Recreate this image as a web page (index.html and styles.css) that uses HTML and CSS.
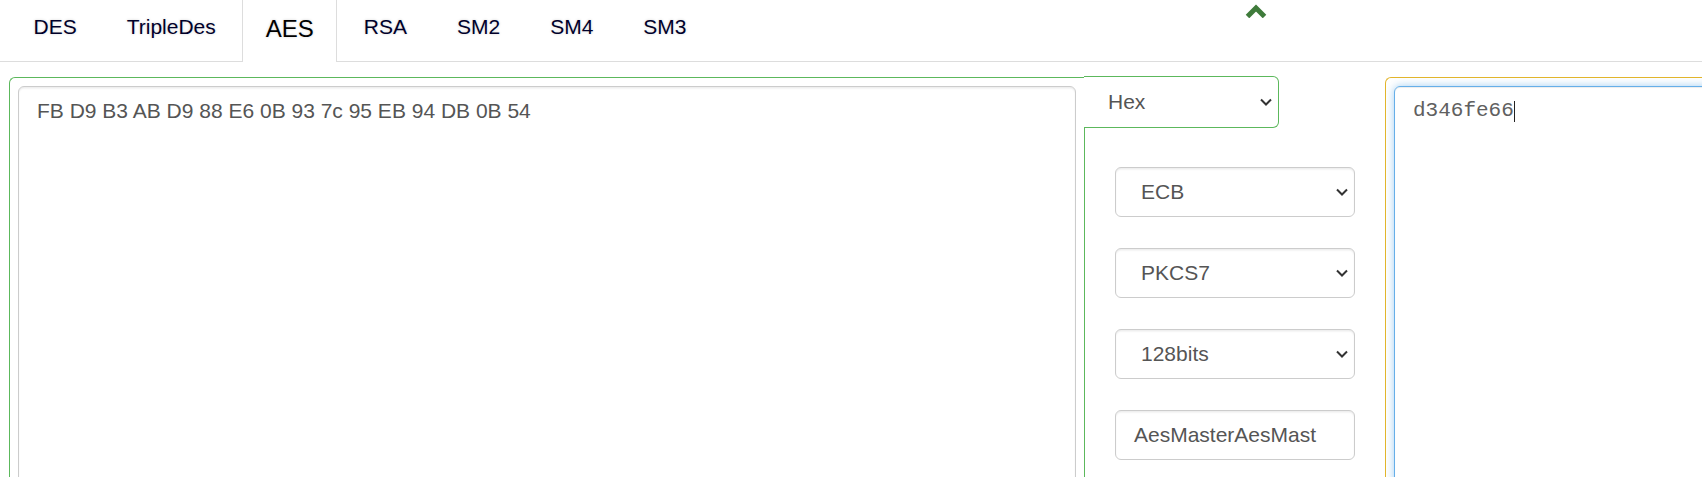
FILE: index.html
```html
<!DOCTYPE html>
<html lang="en">
<head>
<meta charset="utf-8">
<title>AES</title>
<link rel="stylesheet" href="styles.css">
</head>
<body>
<div class="page">
  <nav class="tabs">
    <a class="tab">DES</a>
    <a class="tab">TripleDes</a>
    <a class="tab active">AES</a>
    <a class="tab">RSA</a>
    <a class="tab">SM2</a>
    <a class="tab">SM4</a>
    <a class="tab">SM3</a>
    <span class="toggle">
      <svg width="22" height="14" viewBox="0 0 22 14"><polyline points="2.5,12.5 11,4 19.5,12.5" fill="none" stroke="#3f7b3b" stroke-width="5" stroke-linejoin="miter"/></svg>
    </span>
  </nav>
  <div class="workspace">
    <section class="panel panel-input">
      <div class="textarea">FB D9 B3 AB D9 88 E6 0B 93 7c 95 EB 94 DB 0B 54</div>
    </section>
    <section class="controls">
      <div class="format">
        <div class="select select-bare"><span class="value">Hex</span><svg class="arrow" width="12" height="8" viewBox="0 0 12 8"><polyline points="1,1.5 6,6.5 11,1.5" fill="none" stroke="#333" stroke-width="2"/></svg></div>
      </div>
      <div class="select"><span class="value">ECB</span><svg class="arrow" width="12" height="8" viewBox="0 0 12 8"><polyline points="1,1.5 6,6.5 11,1.5" fill="none" stroke="#333" stroke-width="2"/></svg></div>
      <div class="select"><span class="value">PKCS7</span><svg class="arrow" width="12" height="8" viewBox="0 0 12 8"><polyline points="1,1.5 6,6.5 11,1.5" fill="none" stroke="#333" stroke-width="2"/></svg></div>
      <div class="select"><span class="value">128bits</span><svg class="arrow" width="12" height="8" viewBox="0 0 12 8"><polyline points="1,1.5 6,6.5 11,1.5" fill="none" stroke="#333" stroke-width="2"/></svg></div>
      <div class="input">AesMasterAesMast</div>
    </section>
    <section class="panel panel-output">
      <div class="textarea textarea-focus">d346fe66<span class="caret"></span></div>
    </section>
  </div>
</div>
</body>
</html>
```
FILE: styles.css
```css
html, body {
  margin: 0;
  height: 477px;
  overflow: hidden;
  background: #fff;
}
body {
  font-family: "Liberation Sans", Arial, sans-serif;
}
.tabs {
  display: flex;
  height: 61px;
  border-bottom: 1px solid #ddd;
  padding-left: 10px;
}
.tab {
  box-sizing: border-box;
  padding: 12px 22.5px 0;
  margin-right: 3px;
  margin-bottom: -1px;
  border: 1px solid transparent;
  border-top: 0;
  border-bottom: 0;
  font-size: 21px;
  line-height: 30px;
  color: #00002a;
  text-shadow: 0 0 3px rgba(0, 0, 0, 0.18);
  text-decoration: none;
}
.tab.active {
  border-color: #ddd;
  background: #fff;
  color: #000;
  font-size: 24px;
  padding-top: 13.5px;
}
.toggle {
  margin-left: 532px;
  padding-top: 4px;
}
.toggle svg {
  display: block;
}
.workspace {
  display: flex;
  align-items: flex-start;
  margin-top: 14px;
  padding-left: 9px;
}
.panel {
  flex: 0 0 auto;
  margin-top: 1px;
  height: 440px;
  border-top-left-radius: 6px;
}
.panel-input {
  border-top: 1px solid #5cb85c;
  border-left: 1px solid #5cb85c;
  padding: 8px 8px 0 8px;
}
.panel-output {
  flex: 0 0 420px;
  border-top: 1px solid #e3b52b;
  border-left: 1px solid #e3b52b;
  padding: 8px 0 0 8px;
}
.textarea {
  box-sizing: border-box;
  height: 440px;
  border: 1px solid #ccc;
  border-radius: 6px;
  box-shadow: inset 0 1.5px 1.5px rgba(0, 0, 0, 0.075);
  padding: 9px 18px;
  font-size: 21px;
  line-height: 30px;
  color: #555;
}
.panel-input .textarea {
  width: 1058px;
}
.textarea-focus {
  width: 500px;
  border-color: #66afe9;
  box-shadow: inset 0 1px 1px rgba(0, 0, 0, 0.075), 0 0 8px rgba(102, 175, 233, 0.6);
  font-family: "Liberation Mono", "Courier New", monospace;
  color: #606060;
}
.caret {
  display: inline-block;
  width: 1px;
  height: 21px;
  background: #222;
  vertical-align: -6px;
}
.controls {
  flex: 0 0 auto;
  box-sizing: border-box;
  width: 301px;
  height: 460px;
  border-left: 1px solid #5cb85c;
  padding: 0 30px;
  display: flex;
  flex-direction: column;
  gap: 31px;
}
.format {
  margin-left: -31px;
  margin-bottom: 8px;
  width: 195px;
  height: 52px;
  box-sizing: border-box;
  background: #fff;
  border: 1px solid #5cb85c;
  border-left: 0;
  border-radius: 0 6px 6px 0;
}
.select,
.input {
  box-sizing: border-box;
  height: 50px;
  border: 1px solid #ccc;
  border-radius: 6px;
  box-shadow: inset 0 1.5px 1.5px rgba(0, 0, 0, 0.075);
  font-size: 21px;
  line-height: 48px;
  color: #555;
}
.select {
  display: flex;
  align-items: center;
  justify-content: space-between;
  padding: 0 6px 0 25px;
}
.select-bare {
  height: 50px;
  border: 0;
  box-shadow: none;
  border-radius: 0;
  padding: 0 6px 0 24px;
}
.arrow {
  display: block;
}
.input {
  padding: 0 18px;
}
```
